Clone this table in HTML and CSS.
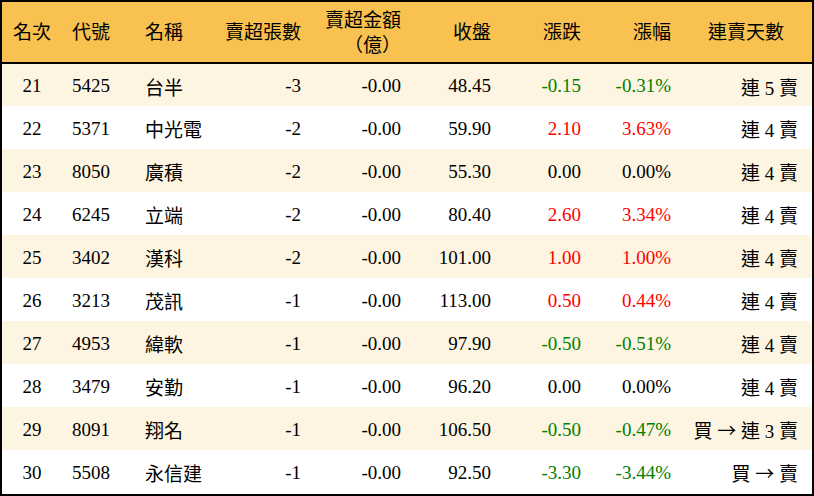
FILE: index.html
```html
<!DOCTYPE html>
<html lang="zh-Hant">
<head>
<meta charset="utf-8">
<title>賣超排行</title>
<link rel="stylesheet" href="styles.css">
</head>
<body>
<div class="frame">
<table class="board">
  <colgroup>
    <col class="c-rank"><col class="c-code"><col class="c-name"><col class="c-vol"><col class="c-amt"><col class="c-close"><col class="c-chg"><col class="c-pct"><col class="c-days">
  </colgroup>
  <thead>
    <tr>
      <th class="ctr">名次</th>
      <th class="ctr">代號</th>
      <th class="name">名稱</th>
      <th class="num">賣超張數</th>
      <th class="num">賣超金額<br>（億）</th>
      <th class="num">收盤</th>
      <th class="num">漲跌</th>
      <th class="num">漲幅</th>
      <th class="ctr">連賣天數</th>
    </tr>
  </thead>
  <tbody>
    <tr><td class="ctr">21</td><td class="ctr">5425</td><td class="name">台半</td><td class="num">-3</td><td class="num">-0.00</td><td class="num">48.45</td><td class="num down">-0.15</td><td class="num down">-0.31%</td><td class="days">連 5 賣</td></tr>
    <tr><td class="ctr">22</td><td class="ctr">5371</td><td class="name">中光電</td><td class="num">-2</td><td class="num">-0.00</td><td class="num">59.90</td><td class="num up">2.10</td><td class="num up">3.63%</td><td class="days">連 4 賣</td></tr>
    <tr><td class="ctr">23</td><td class="ctr">8050</td><td class="name">廣積</td><td class="num">-2</td><td class="num">-0.00</td><td class="num">55.30</td><td class="num">0.00</td><td class="num">0.00%</td><td class="days">連 4 賣</td></tr>
    <tr><td class="ctr">24</td><td class="ctr">6245</td><td class="name">立端</td><td class="num">-2</td><td class="num">-0.00</td><td class="num">80.40</td><td class="num up">2.60</td><td class="num up">3.34%</td><td class="days">連 4 賣</td></tr>
    <tr><td class="ctr">25</td><td class="ctr">3402</td><td class="name">漢科</td><td class="num">-2</td><td class="num">-0.00</td><td class="num">101.00</td><td class="num up">1.00</td><td class="num up">1.00%</td><td class="days">連 4 賣</td></tr>
    <tr><td class="ctr">26</td><td class="ctr">3213</td><td class="name">茂訊</td><td class="num">-1</td><td class="num">-0.00</td><td class="num">113.00</td><td class="num up">0.50</td><td class="num up">0.44%</td><td class="days">連 4 賣</td></tr>
    <tr><td class="ctr">27</td><td class="ctr">4953</td><td class="name">緯軟</td><td class="num">-1</td><td class="num">-0.00</td><td class="num">97.90</td><td class="num down">-0.50</td><td class="num down">-0.51%</td><td class="days">連 4 賣</td></tr>
    <tr><td class="ctr">28</td><td class="ctr">3479</td><td class="name">安勤</td><td class="num">-1</td><td class="num">-0.00</td><td class="num">96.20</td><td class="num">0.00</td><td class="num">0.00%</td><td class="days">連 4 賣</td></tr>
    <tr><td class="ctr">29</td><td class="ctr">8091</td><td class="name">翔名</td><td class="num">-1</td><td class="num">-0.00</td><td class="num">106.50</td><td class="num down">-0.50</td><td class="num down">-0.47%</td><td class="days">買 <span class="arrow">→</span> 連 3 賣</td></tr>
    <tr><td class="ctr">30</td><td class="ctr">5508</td><td class="name">永信建</td><td class="num">-1</td><td class="num">-0.00</td><td class="num">92.50</td><td class="num down">-3.30</td><td class="num down">-3.44%</td><td class="days">買 <span class="arrow">→</span> 賣</td></tr>
  </tbody>
</table>
</div>
</body>
</html>
```

FILE: styles.css
```css
html, body {
  margin: 0;
  padding: 0;
  background: #ffffff;
}

.frame {
  width: 814px;
  height: 496px;
  box-sizing: border-box;
  border: 2px solid #000;
  overflow: hidden;
}

.board {
  width: 810px;
  border-collapse: collapse;
  border-spacing: 0;
  table-layout: fixed;
  font-family: "Liberation Serif", "Noto Sans CJK TC", serif;
  font-size: 19px;
  color: #000;
}

.c-rank { width: 60px; }
.c-code { width: 58px; }
.c-name { width: 80px; }
.c-vol { width: 110px; }
.c-amt { width: 100px; }
.c-close { width: 90px; }
.c-chg { width: 90px; }
.c-pct { width: 90px; }
.c-days { width: 132px; }

thead tr {
  background: #f8c150;
}

th {
  height: 61px;
  box-sizing: border-box;
  font-weight: normal;
  line-height: 25px;
  padding: 1px 9px 0 0;
  border-bottom: 2px solid #000;
}

td {
  height: 43px;
  box-sizing: border-box;
  padding: 2px 9px 0 0;
  white-space: nowrap;
}

tbody tr:nth-child(odd) {
  background: #fdf5e2;
}

tbody tr:nth-child(even) {
  background: #ffffff;
}

.ctr {
  text-align: center;
  padding-right: 0;
}

.name {
  text-align: left;
  padding-left: 25px;
}

.num {
  text-align: right;
}

.days {
  text-align: right;
  padding-right: 14px;
}

.arrow {
  font-family: "Noto Sans CJK TC", sans-serif;
}

.down { color: #008000; }
.up { color: #ff0000; }
```
